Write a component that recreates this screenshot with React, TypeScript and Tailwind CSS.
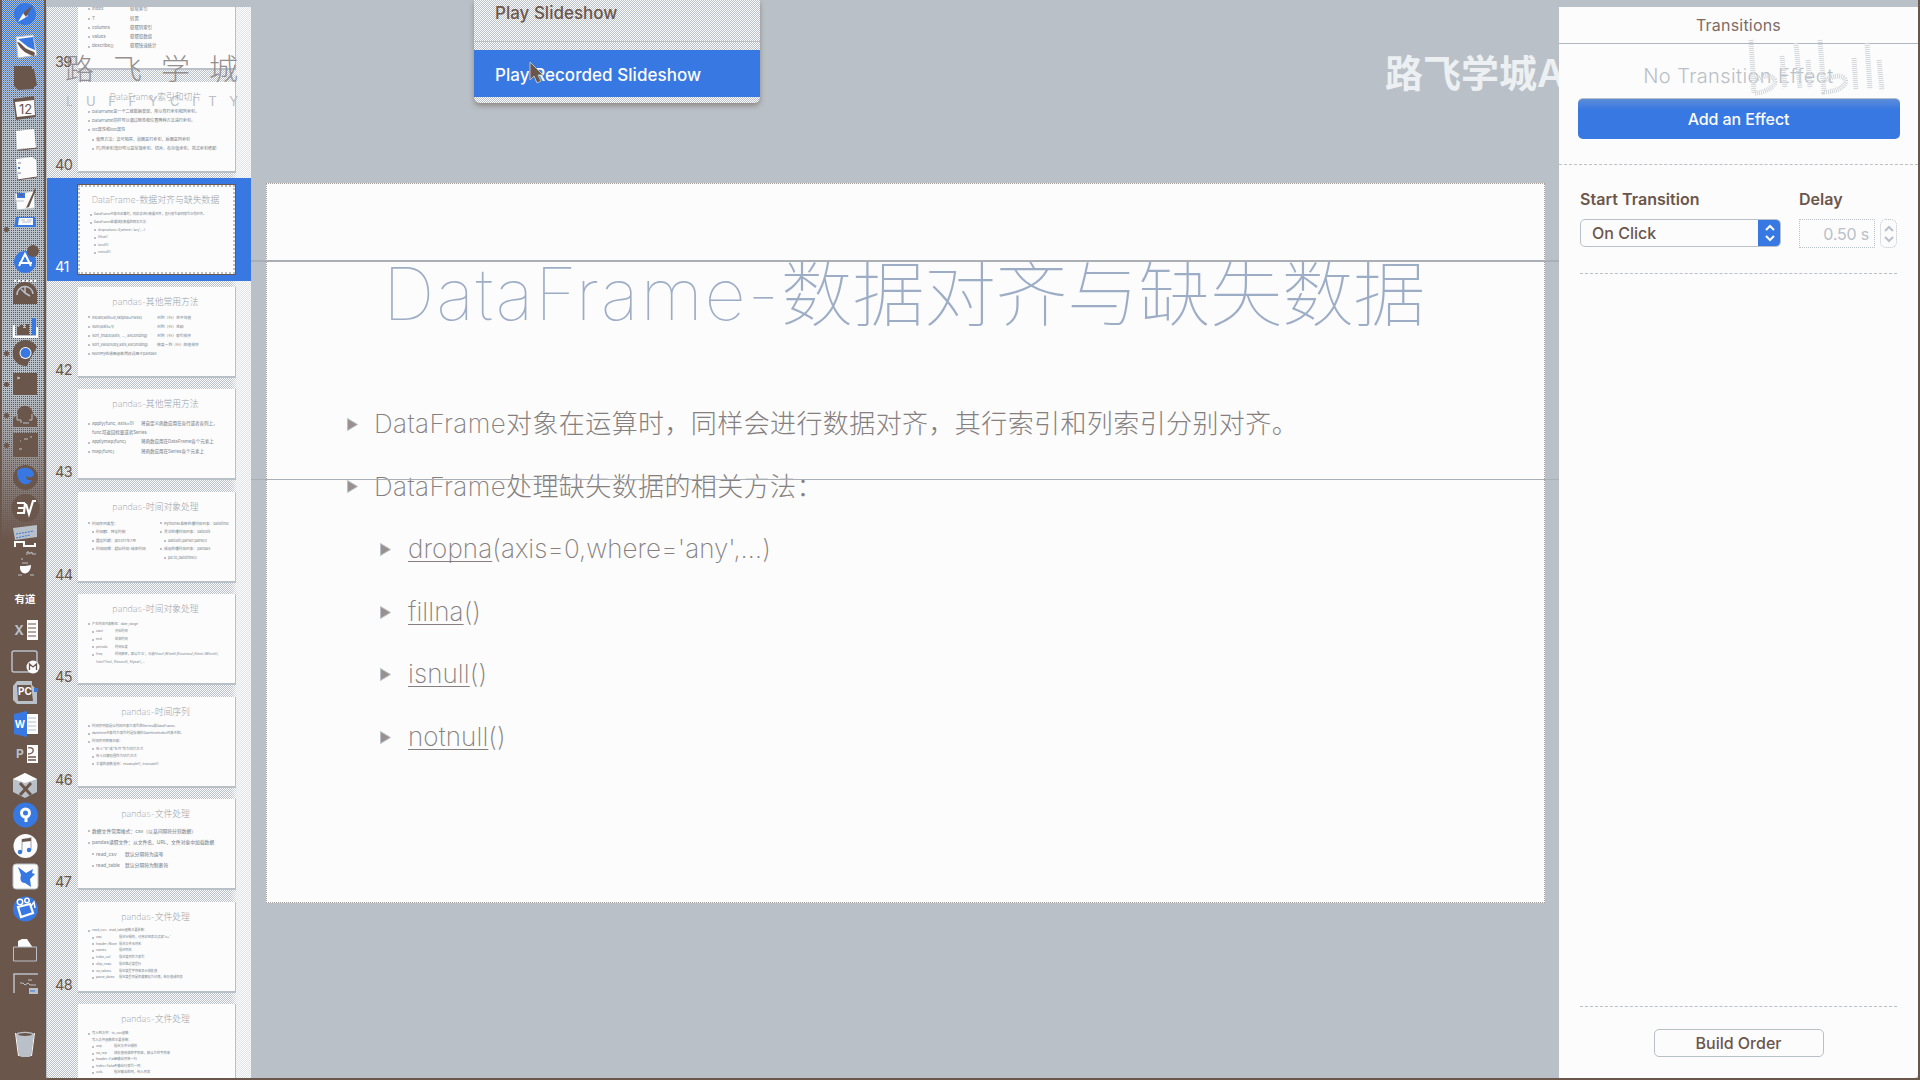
import React from "react";

type Line = { l?: number; t: string; b?: string; nb?: boolean };
type Slide = {
  n: number;
  title: string;
  first: number;
  pitch: number;
  size: number;
  col: number;
  lines: Line[];
  right?: Line[];
  selected?: boolean;
};

const slides: Slide[] = [
  {
    n: 39, title: "DataFrame-常用属性", first: 30.5, pitch: 9.3, size: 4.4, col: 52,
    lines: [
      { t: "index", b: "获取索引" },
      { t: "T", b: "转置" },
      { t: "columns", b: "获取列索引" },
      { t: "values", b: "获取值数组" },
      { t: "describe()", b: "获取快速统计" },
    ],
  },
  {
    n: 40, title: "DataFrame-索引和切片", first: 30.5, pitch: 9.2, size: 4.1, col: 0,
    lines: [
      { t: "DataFrame是一个二维数据类型，所以有行索引和列索引。" },
      { t: "DataFrame同样可以通过标签和位置两种方法进行索引。" },
      { t: "loc属性和iloc属性" },
      { l: 1, t: "使用方法：逗号隔开，前面是行索引，后面是列索引" },
      { l: 1, t: "行/列索引部分可以是常规索引、切片、布尔值索引、花式索引搭配" },
    ],
  },
  {
    n: 41, title: "DataFrame-数据对齐与缺失数据", first: 28, pitch: 7.6, size: 3.2, col: 0, selected: true,
    lines: [
      { t: "DataFrame对象在运算时，同样会进行数据对齐，其行索引和列索引分别对齐。" },
      { t: "DataFrame处理缺失数据的相关方法：" },
      { l: 1, t: "dropna(axis=0,where='any',…)" },
      { l: 1, t: "fillna()" },
      { l: 1, t: "isnull()" },
      { l: 1, t: "notnull()" },
    ],
  },
  {
    n: 42, title: "pandas-其他常用方法", first: 31, pitch: 9.2, size: 3.8, col: 79,
    lines: [
      { t: "mean(axis=0,skipna=False)", b: "对列（行）求平均值" },
      { t: "sum(axis=1)", b: "对列（行）求和" },
      { t: "sort_index(axis, …, ascending)", b: "对列（行）索引排序" },
      { t: "sort_values(by,axis,ascending)", b: "按某一列（行）的值排序" },
      { t: "NumPy的通用函数同样适用于pandas" },
    ],
  },
  {
    n: 43, title: "pandas-其他常用方法", first: 35, pitch: 9.3, size: 4.5, col: 63,
    lines: [
      { t: "apply(func, axis=0)", b: "将自定义函数应用在各行或者各列上，" },
      { nb: true, t: "func可返回标量或者Series" },
      { t: "applymap(func)", b: "将函数应用在DataFrame各个元素上" },
      { t: "map(func)", b: "将函数应用在Series各个元素上" },
    ],
  },
  {
    n: 44, title: "pandas-时间对象处理", first: 32, pitch: 8.6, size: 3.7, col: 0,
    lines: [
      { t: "时间序列类型：" },
      { l: 1, t: "时间戳：特定时刻" },
      { l: 1, t: "固定时期：如2017年7月" },
      { l: 1, t: "时间间隔：起始时间-结束时间" },
    ],
    right: [
      { t: "Python标准库处理时间对象：datetime" },
      { t: "灵活处理时间对象：dateutil" },
      { l: 1, t: "dateutil.parser.parse()" },
      { t: "成组处理时间对象：pandas" },
      { l: 1, t: "pd.to_datetime()" },
    ],
  },
  {
    n: 45, title: "pandas-时间对象处理", first: 30.5, pitch: 7.6, size: 3.2, col: 37,
    lines: [
      { t: "产生时间对象数组：date_range" },
      { l: 1, t: "start", b: "开始时间" },
      { l: 1, t: "end", b: "结束时间" },
      { l: 1, t: "periods", b: "时间长度" },
      { l: 1, t: "freq", b: "时间频率，默认为'D'，可选H(our),W(eek),B(usiness),S(emi-)M(onth)," },
      { l: 1, nb: true, t: "(min)T(es), S(econd), A(year),…" },
    ],
  },
  {
    n: 46, title: "pandas-时间序列", first: 30, pitch: 7.6, size: 3.4, col: 0,
    lines: [
      { t: "时间序列就是以时间对象为索引的Series或DataFrame。" },
      { t: "datetime对象作为索引时是存储在DatetimeIndex对象中的。" },
      { t: "时间序列特殊功能：" },
      { l: 1, t: "传入“年”或“年月”作为切片方式" },
      { l: 1, t: "传入日期范围作为切片方式" },
      { l: 1, t: "丰富的函数支持：resample(), truncate()" },
    ],
  },
  {
    n: 47, title: "pandas-文件处理", first: 32, pitch: 11.6, size: 4.8, col: 47,
    lines: [
      { t: "数据文件常用格式：csv（以某间隔符分割数据）" },
      { t: "pandas读取文件：从文件名、URL、文件对象中加载数据" },
      { l: 1, t: "read_csv", b: "默认分隔符为逗号" },
      { l: 1, t: "read_table", b: "默认分隔符为制表符" },
    ],
  },
  {
    n: 48, title: "pandas-文件处理", first: 29.5, pitch: 6.7, size: 3.2, col: 41,
    lines: [
      { t: "read_csv、read_table函数主要参数：" },
      { l: 1, t: "sep", b: "指定分隔符，可用正则表达式如'\\s+'" },
      { l: 1, t: "header=None", b: "指定文件无列名" },
      { l: 1, t: "names", b: "指定列名" },
      { l: 1, t: "index_col", b: "指定某列作为索引" },
      { l: 1, t: "skip_rows", b: "指定跳过某些行" },
      { l: 1, t: "na_values", b: "指定某些字符串表示缺失值" },
      { l: 1, t: "parse_dates", b: "指定某些列是否被解析为日期，布尔值或列表" },
    ],
  },
  {
    n: 49, title: "pandas-文件处理", first: 30, pitch: 6.5, size: 3.3, col: 36,
    lines: [
      { t: "写入到文件：to_csv函数" },
      { nb: true, t: "写入文件函数的主要参数：" },
      { l: 1, t: "sep", b: "指定文件分隔符" },
      { l: 1, t: "na_rep", b: "缺失值转换的字符串，默认为空字符串" },
      { l: 1, t: "header=False", b: "不输出列名一行" },
      { l: 1, t: "index=False", b: "不输出行索引一列" },
      { l: 1, t: "cols", b: "指定输出的列，传入列表" },
    ],
  },
];

function MiniLines({ lines, s }: { lines: Line[]; s: Slide }) {
  return (
    <>
      {lines.map((ln, i) => (
        <div key={i} className="flex items-center whitespace-nowrap" style={{ height: s.pitch, paddingLeft: ln.l ? 14 : 10 }}>
          <span className={ln.nb ? "h-[2px] w-[2px]" : "h-[2px] w-[2px] bg-[#b9c0c7]"} />
          <span
            className="ml-[2px] leading-none"
            style={{ width: ln.b ? s.col - (ln.l ? 18 : 14) : undefined }}
          >
            {ln.t}
          </span>
          {ln.b && <span className="leading-none">{ln.b}</span>}
        </div>
      ))}
    </>
  );
}

function Thumb({ s }: { s: Slide }) {
  return (
    <div className={s.selected ? "flex h-[102.5px] shrink-0 bg-[#3878e2]" : "flex h-[102.5px] shrink-0"}>
      <div
        className={
          s.selected
            ? "w-[31px] pt-[81px] pl-[8px] text-[14.5px] leading-[15px] tracking-[-0.7px] text-[#fcfcfc]"
            : "w-[31px] pt-[81px] pl-[8px] text-[14.5px] leading-[15px] tracking-[-0.7px] text-[#6b564c]"
        }
      >
        {s.n}
      </div>
      <div
        className={
          s.selected
            ? "mt-[7px] h-[89px] w-[157px] overflow-hidden border-2 border-dotted border-[#b9c0c7] bg-[#fcfcfc] outline outline-[#6b564c]"
            : "mt-[6px] h-[91px] w-[158px] overflow-hidden border-r border-b-2 border-[#b9c0c7] bg-[#fcfcfc]"
        }
      >
        <div className="relative h-full">
          <div
            className={
              s.selected
                ? "-ml-[2px] pt-[7px] text-center text-[8.9px] leading-[12px] font-extralight whitespace-nowrap text-[#98a1a9]"
                : "-ml-[2px] pt-[9px] text-center text-[8.8px] leading-[12px] font-extralight whitespace-nowrap text-[#98a1a9]"
            }
          >
            {s.title}
          </div>
          <div
            className="absolute inset-x-0 flex font-medium text-[#8a939b]"
            style={{ top: s.first - s.pitch / 2, fontSize: s.size }}
          >
            <div className={s.right ? "w-[72px]" : "w-full"}>
              <MiniLines lines={s.lines} s={s} />
            </div>
            {s.right && (
              <div>
                <MiniLines lines={s.right} s={s} />
              </div>
            )}
          </div>
        </div>
      </div>
    </div>
  );
}

const W = "#fcfcfc";
const G = "#b9c0c7";
const B = "#3878e2";
const N = "#6b564c";

const dockIcons: { y: number; el: React.ReactNode }[] = [
  { y: 14, el: <><circle cx="12" cy="13" r="11" fill={B} /><path d="M5 21 11 11l4 4z" fill={W} /><path d="M20 4 10 12l3 4z" fill={N} /></> },
  { y: 46, el: <><path d="M3 4 20 2l4 20-19 3z" fill={W} stroke={G} /><path d="M5 6 20 4l2 13-7-3z" fill={B} /><path d="M4 9c4 0 6 5 10 7s6 2 8 4l-1 3c-7-2-13-5-17-14z" fill={N} /></> },
  { y: 78, el: <><path d="M1 1h18v3h2l3 16-3 2v2L5 25 1 21z" fill={N} /></> },
  { y: 107, el: <><path d="m0 5 21-3 2 21-20 3z" fill={N} /><path d="m2 8 19-2 1 15-18 2z" fill={W} /><text x="12.5" y="19.5" fontSize="13" textAnchor="middle" fill={N}>12</text></> },
  { y: 139, el: <><path d="m3 5 18-2 2 19-19 1z" fill={W} /><path d="M4 24.5 24 22" stroke={N} /></> },
  { y: 168, el: <><path d="m3 4 16-2 4 3 1 17-19 3z" fill={W} /><path d="m4 25 20-3" stroke={N} /><path d="M5 7h3v2H5zM5 17h3v2H5z" fill={G} /><path d="M5 12h2v2H5z" fill={B} /></> },
  { y: 200, el: <><path d="m2 7 19-3 1 17-18 2z" fill={W} stroke={G} /><path d="M4 6h8v5H4z" fill={B} /><path d="M6 8h4" stroke={N} /><path d="m22 1-9 20 3-1L23 3z" fill={N} /><path d="M3 14h8" stroke={G} /></> },
  { y: 222, el: <><path d="M3 8h19l1 10H1z" fill={B} /><path d="M6 9h14v7H5z" fill={W} /><path d="M8 11h4M14 11h5M9 13h9" stroke={G} /></> },
  { y: 259, el: <><circle cx="12" cy="16" r="11" fill={B} /><path d="M6 20 12 8l6 12M6 17h13" stroke={W} strokeWidth="2" fill="none" /><circle cx="20" cy="5" r="6" fill={N} /></> },
  { y: 293, el: <><path d="M0 24V13a12 11 0 0 1 24 0v11z" fill={N} /><path d="M4 15a8 8 0 0 1 16-1M12 6v7l5 3M8 9l4 4" stroke={G} strokeWidth="1.5" fill="none" /><path d="M1 1h23" stroke={W} strokeWidth="2" strokeDasharray="2 2" /></> },
  { y: 326, el: <><path d="M1 12v12h23V14" stroke={W} strokeWidth="2" fill="none" /><path d="M4 22V14h3v-2h3v3h3v-4h3v11z" fill={N} /><path d="M19 5h4v17h-4z" fill={B} /></> },
  { y: 353, el: <><path d="M24 7A13 13 0 1 0 14 26l2-5z" fill={N} /><circle cx="12.5" cy="13" r="6" fill={W} /><circle cx="12.5" cy="13" r="5" fill={B} /></> },
  { y: 384, el: <><path d="M0 2h24v22H0z" fill={N} /><path d="m4 6 3 1-3 1" stroke={G} fill="none" /></> },
  { y: 416, el: <><path d="M0 24v-9l4-3C4 0 19 0 20 11l4 4v9z" fill={N} /><path d="M4 11v6h4v3M19 11v6h-3M10 20h6" stroke={G} fill="none" /></> },
  { y: 445, el: <><path d="M0 1h25v24H0z" fill={N} /><path d="M7 9h1M11 7h4M17 5h2M6 17h3" stroke={G} /></> },
  { y: 478, el: <><circle cx="12.5" cy="12.5" r="12.5" fill={N} /><path d="M4 6c6-6 17-3 17 4-2 3-6 3-8 1 0 4 3 5 6 4-4 8-15 5-15-9z" fill={B} /></> },
  { y: 508, el: <><circle cx="12.5" cy="13" r="14" fill={N} /><path d="M4 8h8M5 13h7M4 18h7l1-10M13 9l3 10L20 6h3" stroke={W} strokeWidth="2.2" fill="none" /></> },
  { y: 537, el: <><path d="m0 4 24-3v12L2 16z" fill={G} /><path d="m3 10 18-3M3 14l14-3" stroke={B} strokeDasharray="2 1" /><path d="M2 23V18h9v4h11v-3" stroke={W} strokeWidth="2" fill="none" /></> },
  { y: 563, el: <><path d="M14 5V2h2v2l3-2v2h4M9 8v2M9 13h6" stroke={G} fill="none" /><path d="M7 16h5l6-1c0 11-12 11-11 1z" fill={W} /><path d="M5 25h4M17 25h4" stroke={G} /></> },
  { y: 599, el: <text x="12" y="17" fontSize="10.5" fontWeight="700" textAnchor="middle" fill={W}>有道</text> },
  { y: 630, el: <><text x="6" y="18" fontSize="13" fontWeight="700" textAnchor="middle" fill={G}>X</text><path d="M14 3h11v20H14z" fill={W} /><path d="M15 7h8M15 11h8M15 15h8M15 19h8" stroke={N} /></> },
  { y: 661, el: <><rect x="-1" y="3" width="25" height="21" rx="2" stroke={G} strokeWidth="1.5" fill="none" /><circle cx="20" cy="19" r="6.5" fill={W} /><path d="M16.5 22v-6l3.5 3 3.5-3v6" stroke={N} strokeWidth="1.3" fill="none" /></> },
  { y: 693, el: <><path d="M4 1h15v4l5 5v14H4l-4-4V6z" fill={G} /><path d="M4 5h14l2 16H5z" fill={N} /><text x="12" y="15" fontSize="10" fontWeight="700" textAnchor="middle" fill={W}>PC</text><path d="M21 8h4v4h-4z" fill={B} /></> },
  { y: 724, el: <><path d="M1 3 14 0v26L1 23z" fill={B} /><text x="7" y="17" fontSize="10" fontWeight="700" textAnchor="middle" fill={W}>W</text><path d="M14 3h11v20H14z" fill={W} /><path d="M15 7h8M15 11h8M15 15h8M15 19h8" stroke={G} /></> },
  { y: 754, el: <><text x="7" y="17" fontSize="12" fontWeight="700" textAnchor="middle" fill={G}>P</text><path d="M14 4h11v18H14z" fill={W} /><path d="M15 7c7-2 7 6 0 6M15 16h8M15 19h8" stroke={N} strokeWidth="1.3" fill="none" /></> },
  { y: 785, el: <><path d="m0 7 12-6 12 6v13l-12 6L0 20z" fill={G} /><path d="m0 7 12-6 12 6-12 4z" fill={W} /><path d="m7 11 11 12M18 11 7 23" stroke={N} strokeWidth="3" /></> },
  { y: 815, el: <><circle cx="12.5" cy="13" r="12.5" fill={B} /><circle cx="12.5" cy="11" r="4" stroke={W} strokeWidth="3" fill="none" /><path d="M13 14v6" stroke={W} strokeWidth="3" /></> },
  { y: 846, el: <><circle cx="12.5" cy="13" r="12" fill={W} /><path d="M9 19V7l9-2v12" stroke={G} strokeWidth="1.5" fill="none" /><path d="m9 6 9-1v3l-9 1z" fill={N} /><circle cx="7" cy="19" r="2.2" fill={B} /><circle cx="16" cy="17" r="2.2" fill={B} /></> },
  { y: 877, el: <><rect width="25" height="25" x="0" rx="3" fill={W} stroke={G} /><path d="m5 3 8 6 7-4-1 4 3 1-5 5 1 8-6-4c-5 0-5-5-4-8z" fill={B} /></> },
  { y: 909, el: <><circle cx="12.5" cy="13" r="12.5" fill={B} /><path d="m5 11 12-3 3 9-12 4z" stroke={W} strokeWidth="2.2" fill="none" /><path d="m18 10 3-4 1 6" stroke={W} strokeWidth="1.5" fill="none" /><circle cx="7" cy="6" r="2.7" stroke={W} strokeWidth="1.5" fill="none" /><circle cx="14" cy="4.5" r="2.2" stroke={W} strokeWidth="1.5" fill="none" /></> },
  { y: 950, el: <><path d="M5 11V4l4-2h5l6 9z" fill={W} /><path d="M0.5 10h23v14h-23z" stroke={G} fill={N} /></> },
  { y: 983, el: <><path d="M1 23V4h24" stroke={G} strokeWidth="1.5" fill="none" /><path d="M7 13h3l2 2 3-2 2 2h6M15 10h4" stroke={G} fill="none" /><path d="M16 18h9v6h-9z" fill={G} /><path d="M17 21h5" stroke={B} /></> },
  { y: 1044, el: <><path d="M3 3h18l-3 22-2 1H9l-3-1z" fill={G} /><path d="m2.5 2 3 23M21.5 2l-3 23" stroke={W} /><ellipse cx="12" cy="3" rx="9" ry="2.2" fill={G} /><ellipse cx="12" cy="3.5" rx="7" ry="1.5" fill={N} /></> },
];

function Dock() {
  return (
    <div className="relative h-full w-[46px] shrink-0 overflow-hidden bg-[conic-gradient(#6b564c_25%,#b9c0c7_0)] bg-[length:2px_2px]">
      <div className="absolute inset-x-0 top-0 h-[130px] bg-[conic-gradient(#3878e2_25%,#b9c0c7_0_50%,#3878e2_0_75%,#b9c0c7_0)] mask-b-from-30% mask-b-to-100% bg-[length:2px_2px]" />
      <div className="absolute inset-x-0 top-[390px] bottom-0 bg-[linear-gradient(#6b564c00,#6b564c_150px)]" />
      <div className="absolute inset-0 border-x-2 border-[#6b564c]" />
      {[229, 353, 384, 415, 445].map((y) => (
        <span key={y} className="absolute left-1 h-[5px] w-[5px] rounded-full bg-[#6b564c]" style={{ top: y - 2.5 }} />
      ))}
      <div className="relative flex flex-col pl-[13px]">
        {dockIcons.map((d, i) => (
          <svg
            key={d.y}
            viewBox="0 0 26 26"
            className="h-[26px] w-[26px] shrink-0 overflow-visible"
            style={{ marginTop: d.y - 13 - (i ? dockIcons[i - 1].y + 13 : 0) }}
          >
            {d.el}
          </svg>
        ))}
      </div>
    </div>
  );
}

function Sidebar() {
  return (
    <div className="mt-[7px] mb-[2px] w-[205px] shrink-0 overflow-hidden rounded-bl-[4px] border-l border-[#b9c0c7] bg-[#ebedef]">
      <div className="flex h-full flex-col overflow-hidden bg-[linear-gradient(90deg,transparent_184px,#fcfcfc99_190px),conic-gradient(#b9c0c7_25%,#fcfcfc_0_50%,#b9c0c7_0_75%,#fcfcfc_0)] bg-[length:100%_100%,2px_2px]">
        <div className="-mt-[34px] flex flex-col">
          {slides.map((s) => (
            <Thumb key={s.n} s={s} />
          ))}
        </div>
      </div>
    </div>
  );
}

function Bullet() {
  return (
    <svg viewBox="0 0 11 13" className="h-[13px] w-[11px] shrink-0">
      <path d="M0.5 0.5 10.5 6.5 0.5 12.5z" fill="#99918e" stroke="#b9c0c7" />
    </svg>
  );
}

const calls = [
  { name: "dropna", rest: "(axis=0,where='any',…)" },
  { name: "fillna", rest: "()" },
  { name: "isnull", rest: "()" },
  { name: "notnull", rest: "()" },
];

function Canvas() {
  return (
    <div className="relative flex-1 pt-[183px] pl-[15px]">
      <div className="h-[720px] w-[1279px] border border-dotted border-[#a89f9b] bg-[#fcfcfc] pt-[68px]">
        <h1 className="pl-[116px] text-[72px] leading-[84px] font-thin tracking-[-0.45px] whitespace-nowrap text-[#9dadc6]">
          <span className="tracking-[1.75px]">DataFrame-</span>数据对齐与缺失数据
        </h1>
        <ul className="mt-[57px] text-[26px] leading-[62.6px] font-extralight whitespace-nowrap text-[#85807f]">
          <li className="flex items-center pl-[80px]">
            <Bullet />
            <span className="ml-[16px] tracking-[0.4px]">DataFrame对象在运算时，同样会进行数据对齐，其行索引和列索引分别对齐。</span>
          </li>
          <li className="flex items-center pl-[80px]">
            <Bullet />
            <span className="ml-[16px] tracking-[0.4px]">DataFrame处理缺失数据的相关方法：</span>
          </li>
          {calls.map((c) => (
            <li key={c.name} className="flex items-center pl-[113px]">
              <Bullet />
              <span className="ml-[17px]">
                <span className="tracking-[0.1px] underline decoration-[#85807f] decoration-1 underline-offset-[3px] [text-decoration-skip-ink:none]">{c.name}</span>
                {c.rest}
              </span>
            </li>
          ))}
        </ul>
      </div>
      <div className="absolute inset-x-0 top-[260px] h-[1.5px] bg-[#a9afb5]" />
      <div className="absolute inset-x-0 top-[478.5px] h-[1.5px] bg-[#a9afb5]" />
    </div>
  );
}

function Chevrons({ color }: { color: string }) {
  return (
    <svg viewBox="0 0 12 20" className="h-5 w-3" fill="none" stroke={color} strokeWidth="2">
      <path d="m2 7 4-4 4 4M2 13l4 4 4-4" />
    </svg>
  );
}

function Inspector() {
  return (
    <div className="mt-[7px] mb-[2px] flex w-[359px] shrink-0 flex-col rounded-br-[4px] bg-[#fcfcfc] text-[#6b564c]">
      <div className="flex h-[37px] items-center justify-center border-b border-[#b0b7be] text-[16px] tracking-[0.2px] text-[#7d6c64]">Transitions</div>
      <div className="flex h-[121px] flex-col items-center border-b border-dashed border-[#b9c0c7]">
        <div className="mt-[19px] text-[20px] leading-[26px] font-light tracking-[0.4px] text-[#b9c0c7]">No Transition Effect</div>
        <div className="mt-[9px] h-[41px] w-[322px] rounded-[5px] border-t border-[#b9c0c7] bg-[linear-gradient(#5c8cd9,#3878e2_11px)] text-center text-[16px] leading-[40px] font-medium tracking-[-0.1px] text-[#fcfcfc]">
          Add an Effect
        </div>
      </div>
      <div className="mx-[21px] flex h-[109px] border-b border-dashed border-[#b9c0c7] pt-[24px]">
        <div className="w-[219px]">
          <div className="text-[16px] leading-[20px] font-semibold tracking-[0.05px]">Start Transition</div>
          <div className="mt-[10px] flex h-[28px] w-[201px] overflow-hidden rounded-[5px] border border-[#b9c0c7]">
            <div className="flex-1 pl-[11px] text-[16px] leading-[27px] font-medium">On Click</div>
            <div className="-m-px flex w-[23px] items-center justify-center bg-[#3878e2]">
              <Chevrons color="#fcfcfc" />
            </div>
          </div>
        </div>
        <div className="flex-1">
          <div className="text-[16px] leading-[20px] font-semibold">Delay</div>
          <div className="mt-[10px] flex justify-between">
            <div className="h-[29px] w-[76px] border border-dotted border-[#b9c0c7] pr-[5px] text-right text-[16px] leading-[29px] tracking-[-0.2px] text-[#b9c0c7]">0.50 s</div>
            <div className="flex h-[29px] w-[17px] items-center justify-center rounded-[6px] border border-dotted border-[#b9c0c7]">
              <Chevrons color="#b9c0c7" />
            </div>
          </div>
        </div>
      </div>
      <div className="flex-1" />
      <div className="mx-[21px] flex h-[72px] justify-center border-t border-dashed border-[#b9c0c7] pt-[22px]">
        <div className="h-[28px] w-[170px] rounded-[5px] border border-[#b9c0c7] text-center text-[16px] leading-[27px] font-medium">Build Order</div>
      </div>
    </div>
  );
}

function SlideshowMenu() {
  return (
    <div className="absolute top-0 left-[474px] h-[103px] w-[286px] rounded-b-[6px] bg-[conic-gradient(#b9c0c7_25%,#fcfcfc_0_50%,#b9c0c7_0_75%,#fcfcfc_0)] bg-[length:2px_2px] text-[17px] font-medium shadow-[0_3px_5px_#6b564c80]">
      <div className="h-[42px] border-b border-[#b9c0c7] pl-[21px] leading-[26px] text-[#6b564c]">Play Slideshow</div>
      <div className="mt-[8px] h-[47px] bg-[#3878e2] pl-[21px] leading-[51px] tracking-[0.05px] text-[#fcfcfc]">Play Recorded Slideshow</div>
      <svg viewBox="0 0 14 24" className="absolute top-[61px] left-[55px] h-6 w-[14px]">
        <path d="M1 1v18l4-4 3 7 4-2-3-6h5z" fill={N} stroke={G} strokeWidth="1" />
      </svg>
    </div>
  );
}

function Watermarks() {
  return (
    <>
      <div className="absolute top-[51px] left-[65px] flex w-[173px] justify-between text-[29px] leading-[38px] font-light text-[#948f8e]">
        {"路飞学城".split("").map((c) => (
          <span key={c}>{c}</span>
        ))}
      </div>
      <div className="absolute top-[93px] left-[66px] flex w-[172px] justify-between text-[13px] leading-[16px] text-[#b9c0c7]">
        {"LUFFYCITY".split("").map((c, i) => (
          <span key={i}>{c}</span>
        ))}
      </div>
      <div className="absolute top-[50px] left-[1385px] w-[174px] overflow-hidden text-[38px] leading-[46px] font-semibold whitespace-nowrap text-[#edf0f2]">路飞学城A</div>
      <svg viewBox="0 0 140 60" className="absolute top-[38px] left-[1748px] h-[60px] w-[140px]" fill="none" stroke="#d2d6da" strokeWidth="5" strokeDasharray="1 1">
        <path d="M3 2 6 55c14 0 26-10 19-15-4-4-12-1-18 2M34 18l3 32M48 5l4 45M60 22l2 28M72 2l4 52c14 0 26-8 20-14-4-4-12-1-19 2M106 20l2 32M119 5l3 46M131 22l3 30" />
      </svg>
    </>
  );
}

export default function App() {
  return (
    <div className="relative flex h-[1080px] w-[1920px] overflow-hidden bg-[#b9c0c7] font-['Inter','Noto_Sans_CJK_SC',sans-serif]">
      <Dock />
      <Sidebar />
      <Canvas />
      <Inspector />
      <div className="w-[2px] bg-[#6b564c]" />
      <div className="absolute inset-x-0 bottom-0 h-[2px] bg-[#6b564c]" />
      <SlideshowMenu />
      <Watermarks />
    </div>
  );
}
